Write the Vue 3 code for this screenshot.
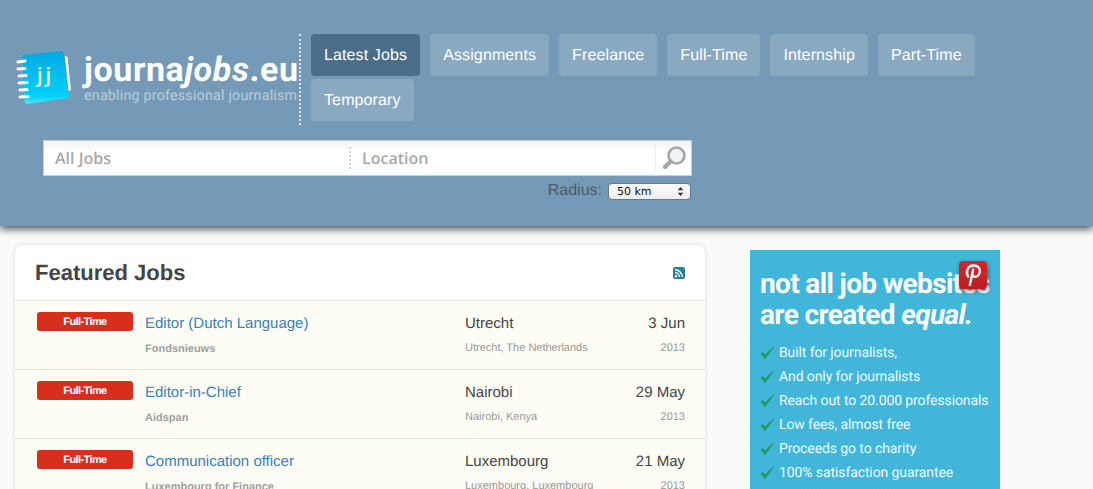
<template>
  <div class="page">
    <header class="top">
      <div class="top-row">
        <a class="logo">
          <svg class="logo-mark" width="60" height="58" viewBox="0 0 60 58">
            <defs>
              <linearGradient id="book" x1="0" y1="0" x2="0" y2="1">
                <stop offset="0" stop-color="#00a9e2" />
                <stop offset="0.85" stop-color="#00d2fa" />
                <stop offset="1" stop-color="#5fdcf5" />
              </linearGradient>
            </defs>
            <path d="M7 6 L46 2 Q48 2 48.5 4 L54 46 Q54 49 51 49.5 L12 55 Q10 55 9.5 53 Z" fill="url(#book)" />
            <path d="M50 7 L52.5 8 L56 41 L53.5 42 Z" fill="#fff" />
            <g stroke="#fff" stroke-width="3" stroke-linecap="round">
              <line x1="3" y1="13" x2="10" y2="12" />
              <line x1="3" y1="20" x2="10" y2="19.5" />
              <line x1="4" y1="27" x2="11" y2="26.5" />
              <line x1="4" y1="34" x2="12" y2="33.5" />
              <line x1="5" y1="41" x2="12" y2="40.5" />
              <line x1="5" y1="48" x2="13" y2="47.5" />
            </g>
          </svg>
          <span class="logo-jj">jj</span>
          <div class="logo-text">
            <div class="logo-name">journa<em>jobs</em>.eu</div>
            <div class="logo-sub">enabling professional journalism</div>
          </div>
        </a>
        <nav class="nav">
          <a v-for="item in navItems" :key="item" class="nav-item" :class="{ active: item === 'Latest Jobs' }">{{ item }}</a>
        </nav>
      </div>

      <div class="search-wrap">
        <div class="search">
          <div class="field">All Jobs</div>
          <div class="field field-location">Location</div>
          <div class="search-btn">
            <svg width="26" height="26" viewBox="0 0 26 26">
              <circle cx="15.5" cy="10.5" r="8" fill="#eef3f6" stroke="#a6a6a6" stroke-width="2.6" />
              <line x1="9.5" y1="16.5" x2="4" y2="22" stroke="#a6a6a6" stroke-width="4.4" stroke-linecap="round" />
            </svg>
          </div>
        </div>
        <div class="radius">
          <span>Radius:</span>
          <div class="select">
            <span>50 km</span>
            <svg width="7" height="11" viewBox="0 0 7 11">
              <path d="M3.5 1 L6.3 4.2 H0.7 Z M3.5 10 L6.3 6.8 H0.7 Z" fill="#333" />
            </svg>
          </div>
        </div>
      </div>
    </header>

    <main class="content">
      <section class="card">
        <div class="card-head">
          <h2>Featured Jobs</h2>
          <svg class="rss" width="12" height="12" viewBox="0 0 12 12">
            <rect width="12" height="12" rx="2" fill="#277ea3" />
            <circle cx="3" cy="9.2" r="1.2" fill="#fff" />
            <path d="M2 5.6 A4.4 4.4 0 0 1 6.4 10 M2 2.8 A7.2 7.2 0 0 1 9.2 10" fill="none" stroke="#fff" stroke-width="1.4" />
          </svg>
        </div>
        <div v-for="job in jobs" :key="job.title" class="job">
          <div class="badge">{{ job.type }}</div>
          <div class="job-main">
            <a class="job-title">{{ job.title }}</a>
            <div class="job-company">{{ job.company }}</div>
          </div>
          <div class="job-place">
            <div class="job-city">{{ job.city }}</div>
            <div class="job-sub">{{ job.region }}</div>
          </div>
          <div class="job-date">
            <div class="job-day">{{ job.date }}</div>
            <div class="job-sub">{{ job.year }}</div>
          </div>
        </div>
      </section>

      <aside class="promo">
        <a class="pin">
          <svg width="20" height="24" viewBox="0 0 20 24">
            <path d="M5.2 13.5 C2.8 10.5 3.6 2.5 10.5 2.5 C16 2.5 17.6 6.5 16.6 10 C15.6 13.5 11.5 15 9.8 12.6 M10.2 6.5 L6.8 22" fill="none" stroke="#fff" stroke-width="2.4" stroke-linecap="round" />
          </svg>
        </a>
        <h3>not all job websites<br />are created <em>equal.</em></h3>
        <ul>
          <li v-for="line in promoLines" :key="line">
            <svg width="14" height="14" viewBox="0 0 14 14">
              <path d="M1 8 L5 12.5 L13.5 1 L5.2 9 L2.8 6.5 Z" fill="#25a25a" stroke="#1a8a48" stroke-width="0.6" stroke-linejoin="round" />
            </svg>
            {{ line }}
          </li>
        </ul>
      </aside>
    </main>
  </div>
</template>

<script setup>
const navItems = ["Latest Jobs", "Assignments", "Freelance", "Full-Time", "Internship", "Part-Time", "Temporary"];

const jobs = [
  { type: "Full-Time", title: "Editor (Dutch Language)", company: "Fondsnieuws", city: "Utrecht", region: "Utrecht, The Netherlands", date: "3 Jun", year: "2013" },
  { type: "Full-Time", title: "Editor-in-Chief", company: "Aidspan", city: "Nairobi", region: "Nairobi, Kenya", date: "29 May", year: "2013" },
  { type: "Full-Time", title: "Communication officer", company: "Luxembourg for Finance", city: "Luxembourg", region: "Luxembourg, Luxembourg", date: "21 May", year: "2013" },
];

const promoLines = [
  "Built for journalists,",
  "And only for journalists",
  "Reach out to 20.000 professionals",
  "Low fees, almost free",
  "Proceeds go to charity",
  "100% satisfaction guarantee",
];
</script>

<style>
html,
body {
  margin: 0;
  background: #fafafa;
}
</style>

<style scoped>
.page {
  height: 489px;
  overflow: hidden;
  font-family: "Liberation Sans", Arial, sans-serif;
  text-rendering: geometricPrecision;
}

.top {
  position: relative;
  height: 226px;
  box-sizing: border-box;
  padding: 34px 0 0 15px;
  background: repeating-conic-gradient(#6f96b4 0 25%, #7a9dba 0 50%) 0 0 / 2px 2px;
  box-shadow: 0 3px 8px rgba(0, 0, 0, 0.7);
}

.top-row {
  display: flex;
  align-items: flex-start;
}

.logo {
  position: relative;
  display: flex;
  align-items: center;
  width: 284px;
  height: 91px;
  border-right: 2px dotted #dfe6ec;
  margin-right: 10px;
}

.logo-mark {
  flex: none;
  margin: -3px 9px 0 0;
}

.logo-jj {
  position: absolute;
  left: 22px;
  top: 27px;
  font: 600 20px "Open Sans", sans-serif;
  letter-spacing: 3px;
  color: #fff;
}

.logo-text {
  margin-top: -2px;
  white-space: nowrap;
}

.logo-name {
  font: 700 34px/34px "Roboto", sans-serif;
  letter-spacing: 0.6px;
  color: #fff;
}

.logo-name em {
  font-style: italic;
}

.logo-sub {
  font: 400 14.3px/18px "Roboto", sans-serif;
  letter-spacing: 0.2px;
  color: #b9ccdb;
}

.nav {
  display: flex;
  flex-wrap: wrap;
  gap: 3px 10px;
  width: 680px;
}

.nav-item {
  height: 42px;
  padding: 0 13px;
  border-radius: 4px;
  background: #88a9c0;
  font-size: 16px;
  letter-spacing: 0.12px;
  line-height: 43px;
  color: #fff;
}

.nav-item.active {
  background: #4a6e89;
}

.search-wrap {
  width: 649px;
  margin: 15px 0 0 28px;
}

.search {
  display: flex;
  align-items: center;
  height: 36px;
  box-sizing: border-box;
  border: 1px solid #c6ced4;
  background: linear-gradient(#f1f1f1, #fff 30%);
}

.field {
  width: 294px;
  padding-left: 11px;
  font: 600 16px "Open Sans", sans-serif;
  color: #a9a9a9;
}

.field-location {
  width: 293px;
  height: 22px;
  line-height: 22px;
  border-left: 2px dotted #d2d2d2;
  padding-left: 11px;
}

.search-btn {
  display: flex;
  align-items: center;
  justify-content: center;
  width: 35px;
  height: 28px;
  border-left: 1px solid #eee;
}

.radius {
  display: flex;
  align-items: center;
  justify-content: flex-end;
  gap: 6px;
  margin: 6px 1px 0 0;
  font-size: 16px;
  color: #505a63;
}

.select {
  display: flex;
  align-items: center;
  justify-content: space-between;
  width: 83px;
  height: 17px;
  box-sizing: border-box;
  padding: 0 6px 0 8px;
  border-radius: 4px;
  border: 1px solid #6b7a86;
  background: linear-gradient(#fff, #ececec);
  font: 11px "DejaVu Sans", sans-serif;
  color: #111;
}

.content {
  display: flex;
  align-items: flex-start;
  padding: 19px 0 0 15px;
}

.card {
  width: 690px;
  border-radius: 8px 8px 0 0;
  background: #fff;
  box-shadow: 0 0 5px rgba(0, 0, 0, 0.13);
}

.card-head {
  display: flex;
  align-items: center;
  justify-content: space-between;
  height: 55px;
  padding: 0 20px;
  border-bottom: 1px solid #e0e0e0;
}

.card-head h2 {
  margin: 0;
  font-size: 22px;
  font-weight: 700;
  color: #444;
}

.job {
  display: flex;
  align-items: flex-start;
  height: 68px;
  padding: 0 20px 0 22px;
  border-bottom: 1px solid #e2e2dc;
  background: #fdfcf5;
}

.badge {
  width: 96px;
  height: 19px;
  margin: 11px 12px 0 0;
  border-radius: 3px;
  background: #d72f1c;
  font-size: 11px;
  font-weight: 700;
  letter-spacing: -0.6px;
  line-height: 20px;
  text-align: center;
  color: #fff;
}

.job-main {
  width: 320px;
}

.job-title {
  display: block;
  margin-top: 13px;
  font-size: 15px;
  line-height: 20px;
  color: #3c80b8;
}

.job-company {
  margin-top: 8px;
  font-size: 11px;
  font-weight: 700;
  line-height: 14px;
  color: #a0a0a0;
}

.job-place {
  flex: 1;
}

.job-city,
.job-day {
  margin-top: 13px;
  font-size: 15px;
  line-height: 20px;
  color: #444;
}

.job-sub {
  margin-top: 7px;
  font-size: 11px;
  line-height: 14px;
  color: #999;
}

.job-date {
  text-align: right;
}

.promo {
  position: relative;
  width: 250px;
  height: 260px;
  margin: 5px 0 0 45px;
  box-sizing: border-box;
  padding: 18px 0 0 10px;
  color: #fff;
  background-color: #3eb5d9;
  background-image: repeating-linear-gradient(45deg, rgba(255, 255, 255, 0.03) 0 1px, transparent 1px 3px);
}

.promo h3 {
  margin: 0 0 11px;
  font: 700 28px/31px "Roboto", sans-serif;
  letter-spacing: -0.65px;
  white-space: nowrap;
}

.promo ul {
  margin: 0;
  padding: 0;
  list-style: none;
}

.promo li {
  display: flex;
  align-items: center;
  gap: 5px;
  height: 24px;
  font: 400 14px "Roboto", sans-serif;
  letter-spacing: -0.1px;
  color: #eefaff;
  white-space: nowrap;
}

.promo li svg {
  flex: none;
}

.pin {
  position: absolute;
  top: 11px;
  right: 13px;
  display: flex;
  align-items: center;
  justify-content: center;
  width: 28px;
  height: 28px;
  border-radius: 4px;
  background: linear-gradient(#d7262b, #b91d22);
  box-shadow: 1px 2px 4px rgba(0, 0, 0, 0.45);
}
</style>
